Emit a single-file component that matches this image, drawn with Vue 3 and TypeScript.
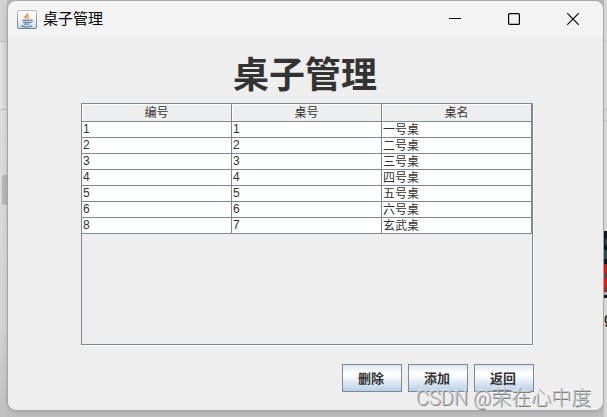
<script setup lang="ts">
import { ref } from 'vue'

interface Desk {
  id: number
  no: number
  name: string
}

const title = '桌子管理'
const columns: string[] = ['编号', '桌号', '桌名']
const desks = ref<Desk[]>([
  { id: 1, no: 1, name: '一号桌' },
  { id: 2, no: 2, name: '二号桌' },
  { id: 3, no: 3, name: '三号桌' },
  { id: 4, no: 4, name: '四号桌' },
  { id: 5, no: 5, name: '五号桌' },
  { id: 6, no: 6, name: '六号桌' },
  { id: 8, no: 7, name: '玄武桌' },
])
const actions: string[] = ['删除', '添加', '返回']
</script>

<template>
  <div class="desktop">
    <div class="strip strip-left" aria-hidden="true">
      <div class="band band-top"></div>
      <div class="band band-mid"></div>
      <div class="band band-rest"><div class="thumb"></div></div>
    </div>

    <main class="window">
      <header class="titlebar">
        <svg class="app-icon" viewBox="0 0 20 20" aria-hidden="true">
          <defs>
            <linearGradient id="tile" x1="0" y1="0" x2="0" y2="1">
              <stop offset="0" stop-color="#fdfdfd" />
              <stop offset="0.55" stop-color="#f0f2f3" />
              <stop offset="1" stop-color="#cfd9e0" />
            </linearGradient>
            <linearGradient id="edge" x1="0" y1="0" x2="0" y2="1">
              <stop offset="0" stop-color="#b3bfc8" />
              <stop offset="1" stop-color="#5f7f97" />
            </linearGradient>
          </defs>
          <rect x="0.5" y="0.5" width="19" height="18" rx="1.5" fill="url(#tile)" stroke="url(#edge)" />
          <path d="M10.600 2.600c1.300 1.900-3.800 2.900-3.200 5 .3.900 1.200 1.500 1.800 2.300-.3-1.300-.3-2 .9-3.100C11.700 5.400 11.900 4 10.600 2.600z" fill="#ee8a34" />
          <path d="M12.600 5.300c-2.200.9-3 1.800-2 2.800.5.6.2 1.200-.5 1.900 1.900-.8 2.200-1.700 1.500-2.500-.5-.7 0-1.400 1-2.200z" fill="#ee8a34" />
          <path d="M5.300 10.300h8.200M6 12.400h7M6.800 14.200h5.600M4 15.900c2.500 1.200 8.500 1.200 11-.1" fill="none" stroke="#6288a8" stroke-width="1.300" />
          <path d="M13.300 9.800c2.600-.5 2.600 2.300-.4 3" fill="none" stroke="#6288a8" stroke-width="1.100" />
        </svg>
        <span class="caption">{{ title }}</span>
        <nav class="window-controls">
          <button type="button" aria-label="最小化">
            <svg viewBox="0 0 12 12"><path d="M0 5.500H12" /></svg>
          </button>
          <button type="button" aria-label="最大化">
            <svg viewBox="0 0 12 12"><rect x="0.600" y="0.600" width="10.800" height="10.800" rx="1" /></svg>
          </button>
          <button type="button" aria-label="关闭">
            <svg viewBox="0 0 12 12"><path d="M0.300 0.300L11.700 11.700M11.700 0.300L0.300 11.700" /></svg>
          </button>
        </nav>
      </header>

      <section class="content">
        <h1>{{ title }}</h1>
        <div class="scroll-pane">
          <table>
            <thead>
              <tr>
                <th v-for="column in columns" :key="column" scope="col">{{ column }}</th>
              </tr>
            </thead>
            <tbody>
              <tr v-for="desk in desks" :key="desk.id">
                <td>{{ desk.id }}</td>
                <td>{{ desk.no }}</td>
                <td class="name">{{ desk.name }}</td>
              </tr>
            </tbody>
          </table>
        </div>
        <div class="actions">
          <button v-for="action in actions" :key="action" type="button">{{ action }}</button>
        </div>
      </section>
    </main>

    <div class="strip strip-right" aria-hidden="true">
      <div class="band band-top"></div>
      <div class="band band-mid"></div>
      <div class="band band-gap"></div>
      <div class="band band-side">
        <svg class="picture" viewBox="0 0 4 67" preserveAspectRatio="none">
          <rect width="4" height="67" fill="#10191b" />
          <path d="M1 8h2v6H1zM0 19h3v9H0z" fill="#34494c" />
          <path d="M0 33h4v28H0z" fill="#a52622" />
          <path d="M1 36h2v5H1zM0 48h3v8H0z" fill="#e51b16" />
          <path d="M0 43h2v4H0zM2 56h2v3H2z" fill="#50504f" />
          <path d="M0 61h4v3H0z" fill="#aaa9b0" />
        </svg>
        <span class="label">g</span>
      </div>
    </div>

    <div class="watermark">CSDN @荣在心中度</div>
  </div>
</template>

<style>
body {
  margin: 0;
}
</style>

<style scoped>
.desktop {
  position: relative;
  display: grid;
  grid-template-columns: 7px minmax(0, 1fr) 3px;
  min-height: 100vh;
  box-sizing: border-box;
  overflow: hidden;
  background: linear-gradient(#b8b8b8, #c9c9c9 20%, #c9c9c9 80%, #bebebe);
  font-family: "Liberation Sans", "Noto Sans CJK SC", sans-serif;
  color: #333;
}

.strip {
  display: flex;
  flex-direction: column;
  min-width: 0;
  overflow: hidden;
}

.band {
  box-sizing: border-box;
  background: linear-gradient(90deg, #e2e2e2, #d4d4d4);
}

.band-top {
  height: 42px;
  background: #d2d2d2;
  border-bottom: 1px solid #bdbdbd;
}

.band-mid {
  height: 68px;
  border-bottom: 1px solid #bdbdbd;
}

.band-gap {
  height: 11px;
  border-bottom: 1px solid #bdbdbd;
}

.band-rest,
.band-side {
  flex: 1;
  background: linear-gradient(#dcdcdc, #d4d4d4 70%, #c0c0c0);
}

.band-rest {
  padding: 65px 0 0 2px;
}

.thumb {
  height: 30px;
  border-radius: 2px 0 0 2px;
  background: #b9b9b9;
}

.strip-right .band {
  background: #d6d6d6;
}

.strip-right .band-side {
  display: flex;
  flex-direction: column;
  padding-top: 110px;
}

.picture {
  width: 4px;
  height: 67px;
}

.label {
  margin-top: 12px;
  font-size: 16px;
  line-height: 18px;
  color: #111;
}

.window {
  display: flex;
  flex-direction: column;
  box-sizing: border-box;
  margin-bottom: 6px;
  border: 1px solid #a5a5a5;
  border-radius: 9px;
  overflow: hidden;
  background: #eee;
  box-shadow: 0 1px 5px rgba(0, 0, 0, 0.15);
}

.titlebar {
  display: flex;
  align-items: center;
  height: 37px;
  padding: 0 1px 0 9px;
  background: #f3f3f3;
}

.app-icon {
  width: 20px;
  height: 20px;
}

.caption {
  margin-left: 6px;
  padding-bottom: 2px;
  font-size: 15px;
  line-height: 20px;
  color: #000;
}

.window-controls {
  display: flex;
  align-self: stretch;
  margin-left: auto;
}

.window-controls button {
  display: flex;
  align-items: center;
  justify-content: center;
  width: 59px;
  padding: 0 0 2px;
  border: 0;
  background: transparent;
}

.window-controls svg {
  width: 12px;
  height: 12px;
  fill: none;
  stroke: #000;
  stroke-width: 1.2;
}

.content {
  flex: 1;
  display: flex;
  flex-direction: column;
  padding: 10px 69px 18px 73px;
}

h1 {
  margin: 0;
  padding-right: 5px;
  font-size: 36px;
  line-height: 55px;
  font-weight: 700;
  text-align: center;
}

.scroll-pane {
  flex: 1;
  margin-right: 1px;
  border: 1px solid #7a8a99;
  box-shadow: 1px 1px 0 #fff;
}

table {
  width: 100%;
  table-layout: fixed;
  border-spacing: 0;
  font-size: 12px;
}

th,
td {
  box-sizing: border-box;
  padding: 0;
  border-right: 1px solid #7a8a99;
  border-bottom: 1px solid #7a8a99;
  overflow: hidden;
  white-space: nowrap;
}

th {
  height: 18px;
  padding-top: 2px;
  font-weight: 400;
  line-height: 15px;
  text-align: center;
  background: #eee;
  box-shadow: inset 1px 1px 0 #fff;
}

td {
  height: 16px;
  padding-left: 1px;
  line-height: 15px;
  background: #fff;
}

td.name {
  padding-top: 1px;
  line-height: 14px;
}

.actions {
  display: flex;
  justify-content: flex-end;
  gap: 6px;
  margin-top: 19px;
}

.actions button {
  width: 60px;
  height: 28px;
  padding: 2px 2px 0 0;
  border: 1px solid #7a8a99;
  background: linear-gradient(#dde8f3, #fff 32%, #fff 38%, #b8cfe5);
  font-family: inherit;
  font-size: 13px;
  font-weight: 700;
  line-height: 18px;
  color: #333;
}

.watermark {
  position: absolute;
  right: 16px;
  bottom: 5px;
  font-family: Roboto, "Noto Sans CJK SC", sans-serif;
  font-size: 20px;
  font-weight: 300;
  line-height: 28px;
  color: #c4c4c4;
  text-shadow: 1px 1px 0 #808080, -1px -1px 0 rgba(255, 255, 255, 0.5);
  white-space: nowrap;
  pointer-events: none;
}
</style>
